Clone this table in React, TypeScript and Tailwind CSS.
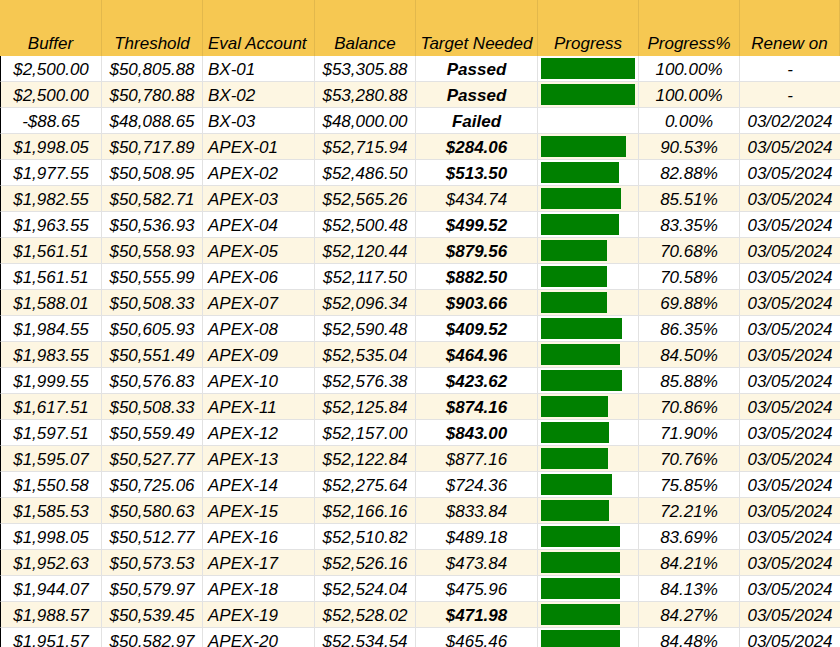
import React from 'react';

type Row = {
    buffer: string
    threshold: string
    account: string
    balance: string
    target: string
    bold: boolean
    progress: number
    renew: string
}

const raw: [string, string, string, string, string, boolean, number, string][] = [
    ['$2,500.00', '$50,805.88', 'BX-01', '$53,305.88', 'Passed', true, 100, '-'],
    ['$2,500.00', '$50,780.88', 'BX-02', '$53,280.88', 'Passed', true, 100, '-'],
    ['-$88.65', '$48,088.65', 'BX-03', '$48,000.00', 'Failed', true, 0, '03/02/2024'],
    ['$1,998.05', '$50,717.89', 'APEX-01', '$52,715.94', '$284.06', true, 90.53, '03/05/2024'],
    ['$1,977.55', '$50,508.95', 'APEX-02', '$52,486.50', '$513.50', true, 82.88, '03/05/2024'],
    ['$1,982.55', '$50,582.71', 'APEX-03', '$52,565.26', '$434.74', false, 85.51, '03/05/2024'],
    ['$1,963.55', '$50,536.93', 'APEX-04', '$52,500.48', '$499.52', true, 83.35, '03/05/2024'],
    ['$1,561.51', '$50,558.93', 'APEX-05', '$52,120.44', '$879.56', true, 70.68, '03/05/2024'],
    ['$1,561.51', '$50,555.99', 'APEX-06', '$52,117.50', '$882.50', true, 70.58, '03/05/2024'],
    ['$1,588.01', '$50,508.33', 'APEX-07', '$52,096.34', '$903.66', true, 69.88, '03/05/2024'],
    ['$1,984.55', '$50,605.93', 'APEX-08', '$52,590.48', '$409.52', true, 86.35, '03/05/2024'],
    ['$1,983.55', '$50,551.49', 'APEX-09', '$52,535.04', '$464.96', true, 84.5, '03/05/2024'],
    ['$1,999.55', '$50,576.83', 'APEX-10', '$52,576.38', '$423.62', true, 85.88, '03/05/2024'],
    ['$1,617.51', '$50,508.33', 'APEX-11', '$52,125.84', '$874.16', true, 70.86, '03/05/2024'],
    ['$1,597.51', '$50,559.49', 'APEX-12', '$52,157.00', '$843.00', true, 71.9, '03/05/2024'],
    ['$1,595.07', '$50,527.77', 'APEX-13', '$52,122.84', '$877.16', false, 70.76, '03/05/2024'],
    ['$1,550.58', '$50,725.06', 'APEX-14', '$52,275.64', '$724.36', false, 75.85, '03/05/2024'],
    ['$1,585.53', '$50,580.63', 'APEX-15', '$52,166.16', '$833.84', false, 72.21, '03/05/2024'],
    ['$1,998.05', '$50,512.77', 'APEX-16', '$52,510.82', '$489.18', false, 83.69, '03/05/2024'],
    ['$1,952.63', '$50,573.53', 'APEX-17', '$52,526.16', '$473.84', false, 84.21, '03/05/2024'],
    ['$1,944.07', '$50,579.97', 'APEX-18', '$52,524.04', '$475.96', false, 84.13, '03/05/2024'],
    ['$1,988.57', '$50,539.45', 'APEX-19', '$52,528.02', '$471.98', true, 84.27, '03/05/2024'],
    ['$1,951.57', '$50,582.97', 'APEX-20', '$52,534.54', '$465.46', false, 84.48, '03/05/2024'],
]

const rows: Row[] = raw.map(([buffer, threshold, account, balance, target, bold, progress, renew]) => ({
    buffer, threshold, account, balance, target, bold, progress, renew,
}))

const headers = ['Buffer', 'Threshold', 'Eval Account', 'Balance', 'Target Needed', 'Progress', 'Progress%', 'Renew on']

const cols = 'grid grid-cols-[102px_101px_112px_101px_122px_101px_101px_100px]'

const App = () => {
    return (
        <div className="w-[840px] h-[647px] overflow-hidden bg-white italic text-[17px] leading-[20px] text-black"
            style={{ fontFamily: '"Liberation Sans", Arial, sans-serif' }}>
            <div className={`${cols} h-[56px] bg-[#f6c852]`}>
                {headers.map((h, i) => (
                    <div key={h}
                        className={`flex items-end pb-[2px] border-r border-[#e2b84c] whitespace-nowrap ${i === 2 ? 'justify-start pl-[5px]' : 'justify-center'}`}>
                        {h}
                    </div>
                ))}
            </div>
            {rows.map((r, idx) => (
                <div key={r.account}
                    className={`${cols} h-[26px] ${idx % 2 === 1 ? 'bg-[#fdf6e2]' : 'bg-white'}`}>
                    <div className="flex items-center justify-center pt-[2px] border-l border-l-black border-r border-b border-[#e2e2e2]">{r.buffer}</div>
                    <div className="flex items-center justify-center pt-[2px] border-r border-b border-[#e2e2e2]">{r.threshold}</div>
                    <div className="flex items-center pl-[5px] pt-[2px] border-r border-b border-[#e2e2e2]">{r.account}</div>
                    <div className="flex items-center justify-center pt-[2px] border-r border-b border-[#e2e2e2]">{r.balance}</div>
                    <div className={`flex items-center justify-center pt-[2px] border-r border-b border-[#e2e2e2] ${r.bold ? 'font-bold' : ''}`}>{r.target}</div>
                    <div className="pl-[3px] pt-[2px] border-r border-b border-[#e2e2e2]">
                        {r.progress > 0 && (
                            <div className="h-[21px] bg-[#008000]" style={{ width: `${(94 * r.progress) / 100}px` }} />
                        )}
                    </div>
                    <div className="flex items-center justify-center pt-[2px] border-r border-b border-[#e2e2e2]">{r.progress.toFixed(2)}%</div>
                    <div className="flex items-center justify-center pt-[2px] border-b border-[#e2e2e2]">{r.renew}</div>
                </div>
            ))}
        </div>
    );
}

export default App;
